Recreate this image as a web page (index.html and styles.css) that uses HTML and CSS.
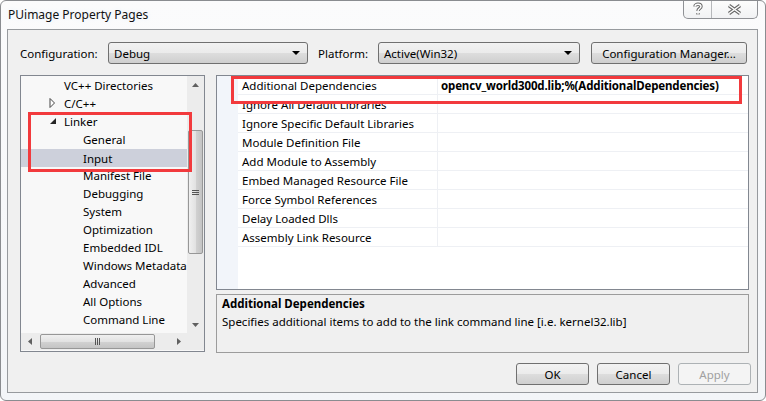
FILE: index.html
```html
<!DOCTYPE html>
<html>
<head>
<meta charset="utf-8">
<link rel="stylesheet" href="styles.css">
</head>
<body>
<div class="window">
  <div class="titlebar">
    <span class="title">PUimage Property Pages</span>
    <div class="caption-btns">
      <div class="cbtn help">
        <svg width="10" height="14" viewBox="0 0 10 14"><path d="M2,4.5 C2,1.5 8,1.5 8,4.5 C8,6.5 5,6.5 5,9 M5,11 L5,12.5" fill="none" stroke="#6a6a6a" stroke-width="3.4"/><path d="M2,4.5 C2,1.5 8,1.5 8,4.5 C8,6.5 5,6.5 5,9 M5,11 L5,12.5" fill="none" stroke="#fff" stroke-width="1.4"/></svg>
      </div>
      <div class="cbtn close">
        <svg width="15" height="11" viewBox="0 0 15 11"><path d="M2,1.5 L13,9.5 M13,1.5 L2,9.5" stroke="#6a6a6a" stroke-width="3.6"/><path d="M2,1.5 L13,9.5 M13,1.5 L2,9.5" stroke="#fff" stroke-width="1.4"/></svg>
      </div>
    </div>
  </div>
  <div class="client">
    <div class="config-row">
      <span class="lbl lbl-cfg">Configuration:</span>
      <div class="combo combo-cfg"><span>Debug</span><i class="arrow"></i></div>
      <span class="lbl lbl-plat">Platform:</span>
      <div class="combo combo-plat"><span>Active(Win32)</span><i class="arrow"></i></div>
      <div class="btn btn-mgr">Configuration Manager...</div>
    </div>
    <div class="main">
      <div class="tree">
        <div class="tree-list">
          <div class="node l1"><span class="exp"></span>VC++ Directories</div>
          <div class="node l1"><span class="exp"><svg width="7" height="10" viewBox="0 0 7 10"><path d="M1,0.5 L5.5,5 L1,9.5 Z" fill="#fff" stroke="#444" stroke-width="1"/></svg></span>C/C++</div>
          <div class="node l1"><span class="exp"><svg width="8" height="8" viewBox="0 0 8 8"><path d="M7,1 L7,7 L1,7 Z" fill="#262626"/></svg></span>Linker</div>
          <div class="node l2">General</div>
          <div class="node l2 sel">Input</div>
          <div class="node l2">Manifest File</div>
          <div class="node l2">Debugging</div>
          <div class="node l2">System</div>
          <div class="node l2">Optimization</div>
          <div class="node l2">Embedded IDL</div>
          <div class="node l2">Windows Metadata</div>
          <div class="node l2">Advanced</div>
          <div class="node l2">All Options</div>
          <div class="node l2">Command Line</div>
        </div>
        <div class="vscroll">
          <div class="sarrow"><svg width="7" height="4" viewBox="0 0 7 4"><path d="M0,4 L3.5,0 L7,4 Z" fill="#606060"/></svg></div>
          <div class="vtrack"><div class="vthumb"><span class="grip-h"></span></div></div>
          <div class="sarrow"><svg width="7" height="4" viewBox="0 0 7 4"><path d="M0,0 L3.5,4 L7,0 Z" fill="#606060"/></svg></div>
        </div>
        <div class="hscroll">
          <div class="sarrow"><svg width="4" height="7" viewBox="0 0 4 7"><path d="M4,0 L0,3.5 L4,7 Z" fill="#606060"/></svg></div>
          <div class="htrack"><div class="hthumb"><span class="grip-v"></span></div></div>
          <div class="sarrow"><svg width="4" height="7" viewBox="0 0 4 7"><path d="M0,0 L4,3.5 L0,7 Z" fill="#606060"/></svg></div>
        </div>
        <div class="corner"></div>
      </div>
      <div class="right">
        <div class="grid">
          <div class="row"><div class="name">Additional Dependencies</div><div class="value">opencv_world300d.lib;%(AdditionalDependencies)</div></div>
          <div class="row"><div class="name">Ignore All Default Libraries</div><div class="value"></div></div>
          <div class="row"><div class="name">Ignore Specific Default Libraries</div><div class="value"></div></div>
          <div class="row"><div class="name">Module Definition File</div><div class="value"></div></div>
          <div class="row"><div class="name">Add Module to Assembly</div><div class="value"></div></div>
          <div class="row"><div class="name">Embed Managed Resource File</div><div class="value"></div></div>
          <div class="row"><div class="name">Force Symbol References</div><div class="value"></div></div>
          <div class="row"><div class="name">Delay Loaded Dlls</div><div class="value"></div></div>
          <div class="row"><div class="name">Assembly Link Resource</div><div class="value"></div></div>
        </div>
        <div class="desc">
          <div class="desc-title">Additional Dependencies</div>
          <div class="desc-text">Specifies additional items to add to the link command line [i.e. kernel32.lib]</div>
        </div>
      </div>
    </div>
    <div class="footer">
      <div class="btn">OK</div>
      <div class="btn">Cancel</div>
      <div class="btn disabled">Apply</div>
    </div>
  </div>
  <div class="mark mark-tree"></div>
  <div class="mark mark-row"></div>
</div>
</body>
</html>
```

FILE: styles.css
```css
* { box-sizing: border-box; }
html, body { margin: 0; padding: 0; background: #fff; }
body {
  font-family: "Noto Sans", "Open Sans", sans-serif;
  font-size: 11.5px;
  color: #000;
}
.window {
  position: relative;
  width: 766px;
  height: 401px;
  border: 1px solid #8a8c90;
  border-radius: 6px;
  background: linear-gradient(#fbfbfc, #f3f5f8);
  display: flex;
  flex-direction: column;
  overflow: hidden;
}
.titlebar {
  height: 28px;
  flex: none;
  display: flex;
  justify-content: space-between;
  align-items: flex-start;
}
.title {
  padding-left: 7px;
  line-height: 28px;
  font-size: 12px;
  color: #111;
  text-shadow: 0 0 6px #e4eef9, 0 0 3px #fff;
}
.caption-btns {
  margin-top: -1px;
  margin-right: 7px;
  height: 19px;
  display: flex;
  border: 1px solid #8f9195;
  border-top: none;
  border-radius: 0 0 5px 5px;
  background: linear-gradient(#fdfdfd, #f1f2f4);
  overflow: hidden;
}
.cbtn {
  display: flex;
  align-items: center;
  justify-content: center;
}
.cbtn.help { width: 28px; border-right: 1px solid #b6b8bb; }
.cbtn.close { width: 45px; }

.client {
  flex: 1;
  margin: 0 7px 7px 6px;
  border: 1px solid #979a9e;
  background: #f0f0f0;
  display: flex;
  flex-direction: column;
}
.config-row {
  margin-top: 12px;
  height: 22px;
  padding-left: 12px;
  display: flex;
  align-items: center;
}
.lbl { display: block; }
.lbl-cfg { width: 88px; }
.lbl-plat { width: 60px; margin-left: 10px; }
.combo {
  height: 22px;
  border: 1px solid #707070;
  border-radius: 3px;
  background: linear-gradient(#f2f2f2 0%, #ebebeb 50%, #dddddd 51%, #cfcfcf 100%);
  display: flex;
  align-items: center;
  justify-content: space-between;
  padding: 0 7px 0 5px;
}
.combo-cfg { width: 200px; }
.combo-plat { width: 202px; }
.arrow {
  width: 0; height: 0;
  border-left: 4px solid transparent;
  border-right: 4px solid transparent;
  border-top: 4px solid #000;
}
.btn {
  height: 22px;
  border: 1px solid #707070;
  border-radius: 3px;
  background: linear-gradient(#f2f2f2 0%, #ebebeb 50%, #dddddd 51%, #cfcfcf 100%);
  display: flex;
  align-items: center;
  justify-content: center;
  width: 73px;
}
.btn-mgr { width: 156px; margin-left: 11px; }
.btn.disabled {
  border-color: #adb2b5;
  background: #f4f4f4;
  color: #a0a0a0;
}

.main {
  margin-top: 11px;
  padding-left: 12px;
  display: flex;
}
.tree {
  width: 185px;
  height: 277px;
  border: 1px solid #828790;
  background: #f8f8f8;
  display: grid;
  grid-template-columns: 166px 17px;
  grid-template-rows: 257px 17px;
}
.tree-list {
  padding-top: 0;
  overflow: hidden;
}
.node {
  height: 18px;
  display: flex;
  align-items: center;
  white-space: nowrap;
  overflow: hidden;
}
.node.l1 { padding-left: 27px; }
.node.l2 { padding-left: 62px; }
.exp {
  width: 16px;
  flex: none;
  display: flex;
  align-items: center;
  padding-left: 1px;
}
.node.sel { background: #cdd0db; margin-top: 1px; margin-bottom: -1px; }

.vscroll {
  background: #ececec;
  display: flex;
  flex-direction: column;
}
.sarrow {
  flex: none;
  width: 17px;
  height: 17px;
  display: flex;
  align-items: center;
  justify-content: center;
}
.vtrack { flex: 1; position: relative; padding-top: 37px; }
.vthumb {
  margin-left: 1px;
  width: 15px;
  height: 124px;
  border: 1px solid #979797;
  border-radius: 2px;
  background: linear-gradient(to right, #f0f0f0, #e2e2e2 50%, #d2d2d2 51%, #c4c4c4);
  display: flex;
  align-items: center;
  justify-content: center;
}
.grip-h {
  width: 7px;
  height: 5px;
  border-top: 1px solid #555;
  border-bottom: 1px solid #555;
  background: linear-gradient(transparent 1px, #555 1px, #555 2px, transparent 2px);
}
.hscroll {
  background: #ececec;
  display: flex;
}
.htrack { flex: 1; padding-left: 2px; }
.hthumb {
  margin-top: 1px;
  width: 115px;
  height: 15px;
  border: 1px solid #979797;
  border-radius: 2px;
  background: linear-gradient(#f0f0f0, #e2e2e2 50%, #d2d2d2 51%, #c4c4c4);
  display: flex;
  align-items: center;
  justify-content: center;
}
.grip-v {
  width: 5px;
  height: 7px;
  border-left: 1px solid #555;
  border-right: 1px solid #555;
  background: linear-gradient(to right, transparent 1px, #555 1px, #555 2px, transparent 2px);
}
.corner { background: #ececec; }

.right {
  margin-left: 11px;
  width: 533px;
  display: flex;
  flex-direction: column;
}
.grid {
  height: 215px;
  border: 1px solid #828790;
  background: linear-gradient(to right, #f2f5fa 21px, #fff 21px);
}
.row {
  margin-left: 21px;
  height: 19px;
  display: flex;
  border-bottom: 1px solid #eef0f4;
}
.name {
  width: 200px;
  padding-left: 4px;
  padding-top: 1px;
  border-right: 1px solid #eef0f4;
  line-height: 18px;
  white-space: nowrap;
  overflow: hidden;
}
.value {
  flex: 1;
  padding-left: 3px;
  padding-top: 1px;
  line-height: 18px;
  font-weight: bold;
  letter-spacing: -0.15px;
  white-space: nowrap;
}
.desc {
  margin-top: 4px;
  height: 59px;
  border: 1px solid #9c9c9c;
  background: #f0f0f0;
  padding: 0 5px;
  line-height: 18px;
}
.desc-title { font-weight: bold; }

.footer {
  margin-top: 10px;
  padding-right: 6px;
  display: flex;
  justify-content: flex-end;
  gap: 8px;
}

.mark {
  position: absolute;
  border: 3px solid #f23a3d;
}
.mark-tree { left: 27px; top: 111px; width: 164px; height: 60px; }
.mark-row { left: 230px; top: 75px; width: 511px; height: 28px; }
```
